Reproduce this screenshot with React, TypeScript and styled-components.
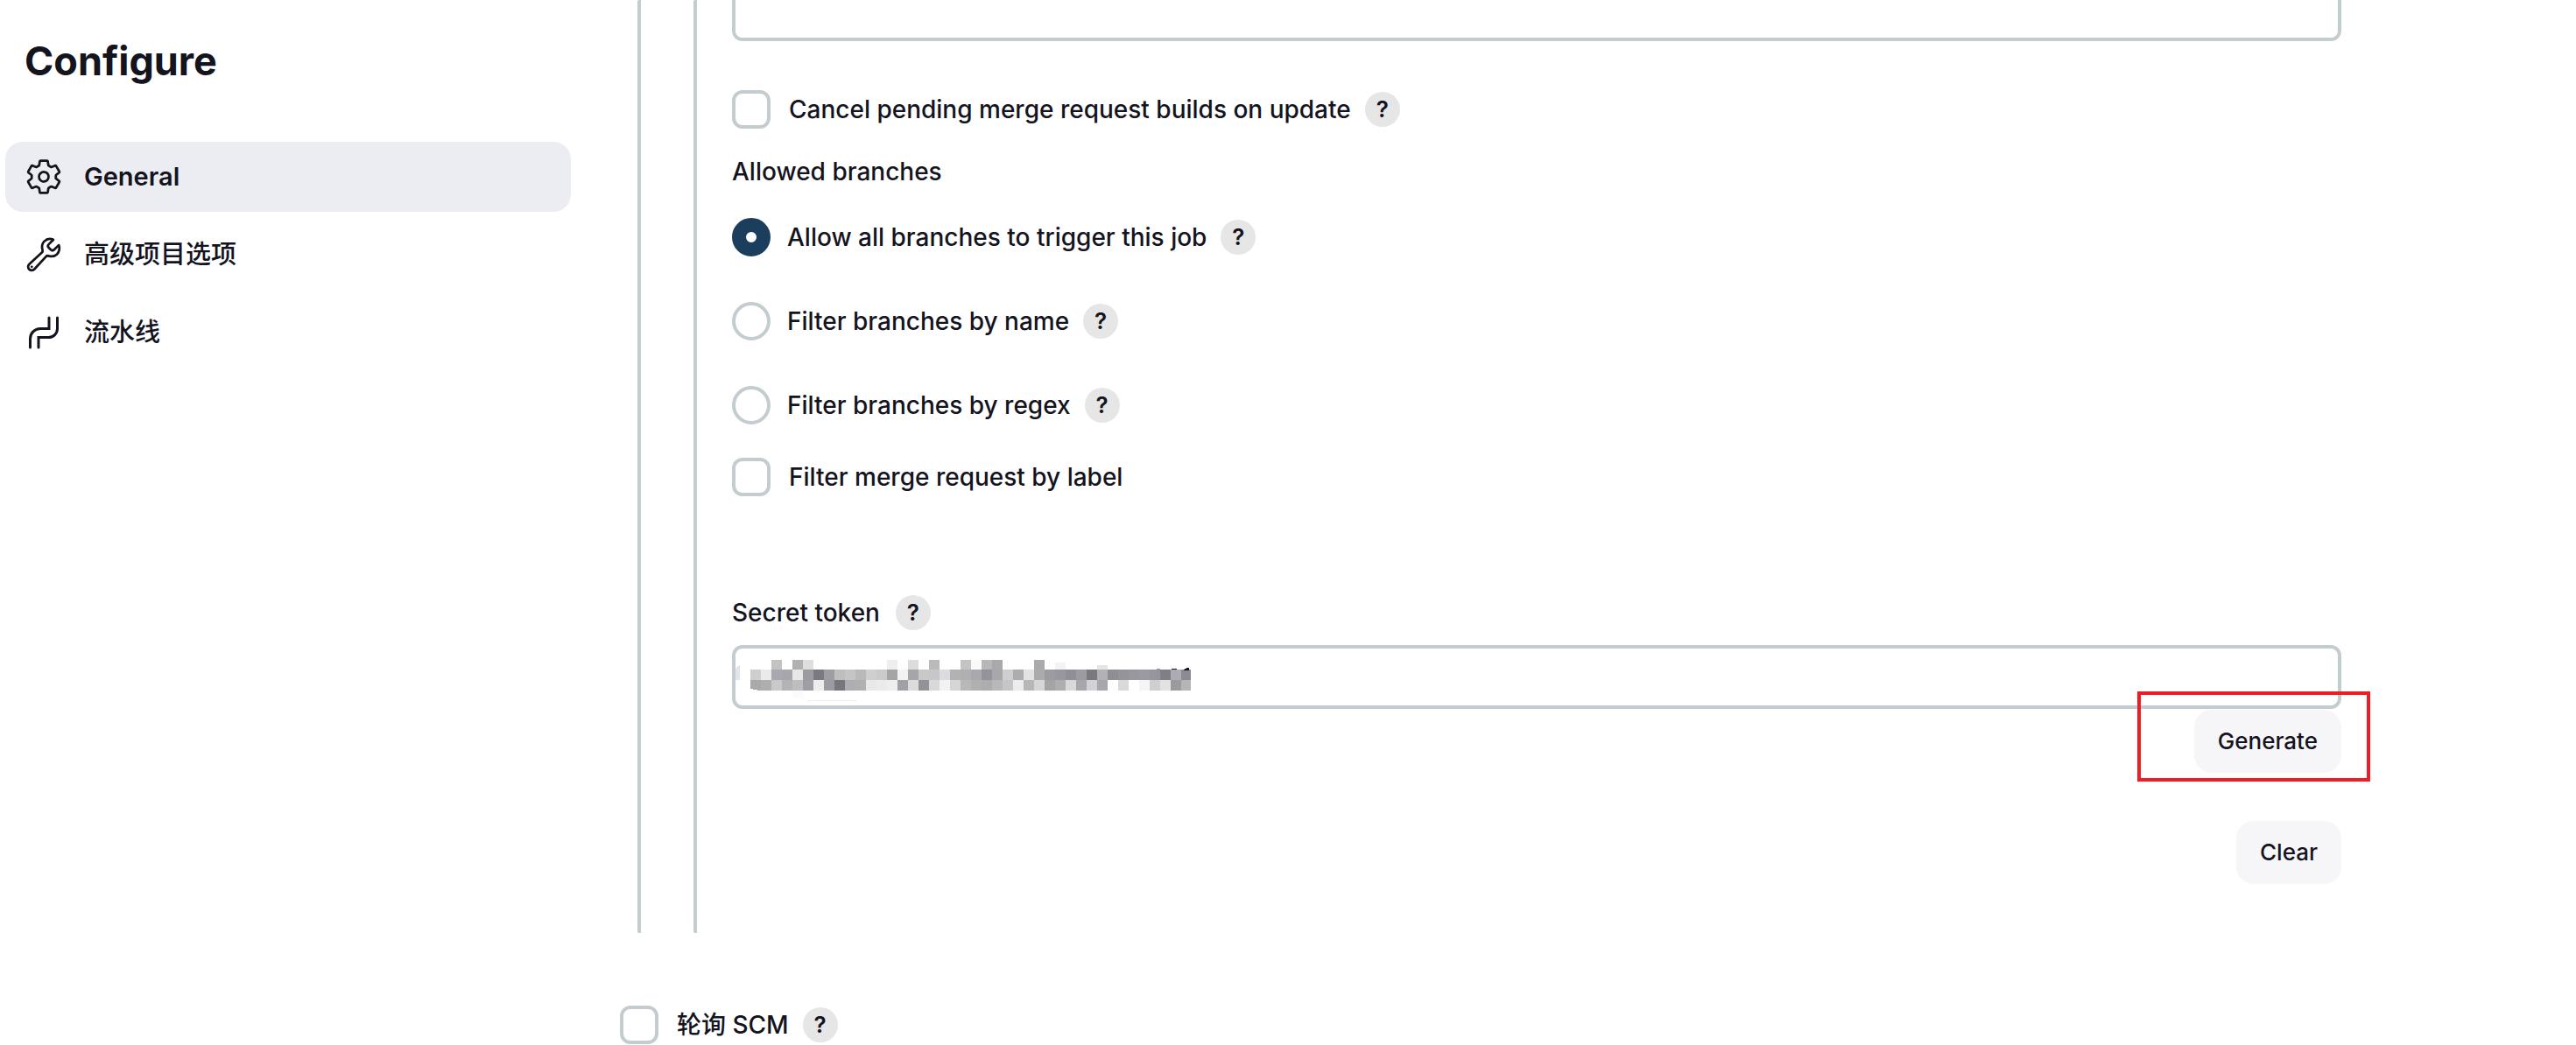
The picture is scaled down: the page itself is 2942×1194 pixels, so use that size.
import React from "react";
import styled, { createGlobalStyle } from "styled-components";
import { IoSettingsOutline, IoBuildOutline } from "react-icons/io5";

const ink = "#14141f";
const line = "#c3cccf";
const accent = "#1a3e5c";

const GlobalStyle = createGlobalStyle`
  *, *::before, *::after { box-sizing: border-box; }
  body {
    margin: 0;
    background: #fff;
    color: ${ink};
    font-family: Inter, "Noto Sans CJK SC", sans-serif;
    font-size: 28px;
    font-weight: 450;
    line-height: 40px;
  }
  button, input, textarea { font: inherit; color: inherit; margin: 0; }
`;

const Page = styled.div`
  display: flex;
  align-items: flex-start;
`;

const Sidebar = styled.aside`
  flex: 0 0 652px;
  padding: 40px 0 0 6px;
`;

const Title = styled.h1`
  margin: 0 0 62px;
  padding-left: 22px;
  font-size: 45px;
  font-weight: 700;
  line-height: 60px;
`;

const Nav = styled.nav`
  display: flex;
  flex-direction: column;
  gap: 9px;
`;

const NavLink = styled.a<{ $active?: boolean }>`
  display: flex;
  align-items: center;
  gap: 24px;
  height: 80px;
  padding: 0 22px;
  border-radius: 20px;
  background: ${(p) => (p.$active ? "#ecedf3" : "transparent")};
  color: inherit;
  font-size: 29px;
  font-weight: ${(p) => (p.$active ? 600 : 500)};
  text-decoration: none;

  svg { flex: none; width: 44px; height: 44px; }
`;

const Main = styled.main`
  flex: 1;
  min-width: 0;
  padding: 0 268px 0 56px;
`;

const OuterBlock = styled.div`
  margin: 0 0 83px 20px;
  padding-left: 60px;
  border-left: 4px solid ${line};
  border-radius: 2px;
`;

const InnerBlock = styled.div`
  padding: 0 0 56px 40px;
  border-left: 4px solid ${line};
  border-radius: 2px;
`;

const CommentBox = styled.textarea`
  display: block;
  width: 100%;
  height: 47px;
  margin-bottom: 56px;
  border: 4px solid ${line};
  border-top: 0;
  border-radius: 0 0 12px 12px;
  background: #fff;
  resize: none;
  outline: none;
`;

const Row = styled.div`
  display: flex;
  align-items: center;
  gap: 16px;
  min-height: 44px;
`;

const ChoiceLabel = styled.label<{ $gap: number }>`
  display: flex;
  align-items: center;
  gap: ${(p) => p.$gap}px;
`;

const Checkbox = styled.input`
  appearance: none;
  flex: none;
  width: 44px;
  height: 44px;
  border: 4px solid ${line};
  border-radius: 12px;
  background: #fff;

  &:checked { background: ${accent}; border-color: ${accent}; }
`;

const Radio = styled.input`
  appearance: none;
  flex: none;
  width: 44px;
  height: 44px;
  border: 4px solid ${line};
  border-radius: 50%;
  background: #fff;

  &:checked { border: 16px solid ${accent}; }
`;

const HelpButton = styled.button`
  display: flex;
  align-items: center;
  justify-content: center;
  width: 40px;
  height: 40px;
  padding: 0;
  border: 0;
  border-radius: 50%;
  background: #e6e6e6;
  font-size: 26px;
  font-weight: 600;
`;

const BranchGroup = styled.fieldset`
  margin: 29px 0 38px;
  padding: 0;
  border: 0;
`;

const GroupTitle = styled.legend`
  padding: 0 0 33px;
`;

const RadioList = styled.div`
  display: grid;
  gap: 52px;
`;

const TokenHeader = styled.div`
  display: flex;
  align-items: center;
  gap: 18px;
  margin: 113px 0 17px;
`;

const TokenField = styled.div`
  position: relative;
  margin-bottom: 1px;
`;

const TokenInput = styled.input`
  display: block;
  width: 100%;
  height: 73px;
  padding: 0 20px;
  border: 4px solid ${line};
  border-radius: 12px;
  background: #fff;
  outline: none;
`;

const TokenMask = styled.svg`
  position: absolute;
  top: 16px;
  left: 4px;
  width: 520px;
  height: 48px;
  pointer-events: none;
`;

const Actions = styled.div`
  display: flex;
  flex-direction: column;
  align-items: flex-end;
  gap: 55px;
`;

const ActionSlot = styled.div`
  position: relative;
  display: flex;
`;

const ActionButton = styled.button`
  height: 72px;
  padding: 0 27px;
  border: 0;
  border-radius: 20px;
  background: #f6f6f9;
  font-size: 26px;
  font-weight: 500;
`;

const Highlight = styled.div`
  position: absolute;
  inset: -21px -33px -10px -65px;
  border: 4px solid #ee1c24;
  pointer-events: none;
`;

const PipelineIcon = () => (
  <svg viewBox="0 0 44 44" fill="none" stroke="currentColor" strokeWidth="3" strokeLinecap="round" aria-hidden="true">
    <path d="M6.5 39V29A11.5 11.5 0 0 1 18 17.5H28V5" />
    <path d="M37.5 5V17.5A10 10 0 0 1 27.5 27.5H16V39" />
  </svg>
);

// Shades of the masked token, one string per pixel row; "-" leaves a cell empty.
const maskRows = [
  "- - c3c3c4 - b1b1b2 dedede - - - - - - - eeeeee - dcdcdd - bababb - - c4c4c5 fafafa b7b7b8 a9a8ab - - - aaa9ae - f3f3f3 - - - e5e5e5",
  "cececf eaeaea a9a8af a8a6ad e7e7e8 9c9ba2 7b7a80 9e9da4 bebebf c5c5c6 b9b9ba cfcfd0 cacacb a5a5a6 f3f3f3 a6a6a9 c8c8c9 c7c7cb dcdce0 b2b2b3 b0b0b3 a9a8ae 949399 a8a7ac cfcfd1 adadaf e3e3e4 ababad 9c9ba1 98979d 908f95 9c9ba1 7a797f b2b2b4 8f8e94 959499 98979d 9b9aa0 96959b 807f86 adacb2 8c8b92",
  "a9a9ac aeaeb0 c9c9cb b3b3b5 bebebf 9f9ea4 ededee 9c9ba2 77767c aeadb4 b0b0b2 e8e8e8 ebebeb eeeeef a1a0a8 dcdcdd 939299 d9d9d9 f2f2f2 d5d5d7 b8b8b9 b0b0b1 adadaf b8b8b9 c6c6c8 ececec b7b7b9 d6d6d8 a4a4a7 aeaeb0 d9d9d9 a7a6ad d2d2d5 a8a7ad - d9d9da - f5f5f5 cfcfd1 e2e2e3 9b9aa0 b5b5b6",
].map((row) => row.split(" "));

const cellTop = (row: number, col: number) => {
  if (row > 0) return row * 12;
  if (col === 33) return 7;
  return col === 29 ? 4 : 1;
};

const Mask = () => (
  <TokenMask viewBox="0 0 520 48" shapeRendering="crispEdges" aria-hidden="true">
    <path d="M0 12Q1 8 5 7V24H0Z" fill="#e2e6e9" />
    {maskRows.map((row, r) =>
      row.map((shade, c) =>
        shade === "-" ? null : (
          <rect
            key={`${r}-${c}`}
            x={17 + c * 12}
            y={cellTop(r, c)}
            width={12}
            height={(r + 1) * 12 - cellTop(r, c)}
            fill={`#${shade}`}
          />
        ),
      ),
    )}
    <path d="M65 36H77V44H65Z" fill="#fbfbfb" />
    <path d="M82 47H138" stroke="#f1f1f1" />
    <path d="M17 34L28 36H17Z" fill="#fff" />
    <path d="M497 12Q501 9 505 12Z M512 13Q513 10 518 10V13Z" fill={ink} />
    <path d="M481 11H485" stroke="#999" />
  </TokenMask>
);

const Help = ({ topic }: { topic: string }) => (
  <HelpButton type="button" aria-label={`Help for ${topic}`}>?</HelpButton>
);

const CheckRow = ({ text, help }: { text: string; help?: boolean }) => (
  <Row>
    <ChoiceLabel $gap={21}>
      <Checkbox type="checkbox" />
      {text}
    </ChoiceLabel>
    {help && <Help topic={text} />}
  </Row>
);

const branchOptions = [
  "Allow all branches to trigger this job",
  "Filter branches by name",
  "Filter branches by regex",
];

export default function App() {
  return (
    <>
      <GlobalStyle />
      <Page>
        <Sidebar>
          <Title>Configure</Title>
          <Nav>
            <NavLink href="#general" $active>
              <IoSettingsOutline aria-hidden="true" />
              General
            </NavLink>
            <NavLink href="#advanced">
              <IoBuildOutline aria-hidden="true" />
              高级项目选项
            </NavLink>
            <NavLink href="#pipeline">
              <PipelineIcon />
              流水线
            </NavLink>
          </Nav>
        </Sidebar>
        <Main>
          <OuterBlock>
            <InnerBlock>
              <CommentBox aria-label="Comment" />
              <CheckRow text="Cancel pending merge request builds on update" help />
              <BranchGroup>
                <GroupTitle>Allowed branches</GroupTitle>
                <RadioList>
                  {branchOptions.map((option, i) => (
                    <Row key={option}>
                      <ChoiceLabel $gap={19}>
                        <Radio type="radio" name="branches" defaultChecked={i === 0} />
                        {option}
                      </ChoiceLabel>
                      <Help topic={option} />
                    </Row>
                  ))}
                </RadioList>
              </BranchGroup>
              <CheckRow text="Filter merge request by label" />
              <TokenHeader>
                <label htmlFor="token">Secret token</label>
                <Help topic="Secret token" />
              </TokenHeader>
              <TokenField>
                <TokenInput id="token" type="text" />
                <Mask />
              </TokenField>
              <Actions>
                <ActionSlot>
                  <ActionButton type="button">Generate</ActionButton>
                  <Highlight />
                </ActionSlot>
                <ActionButton type="button">Clear</ActionButton>
              </Actions>
            </InnerBlock>
          </OuterBlock>
          <CheckRow text="轮询 SCM" help />
        </Main>
      </Page>
    </>
  );
}
